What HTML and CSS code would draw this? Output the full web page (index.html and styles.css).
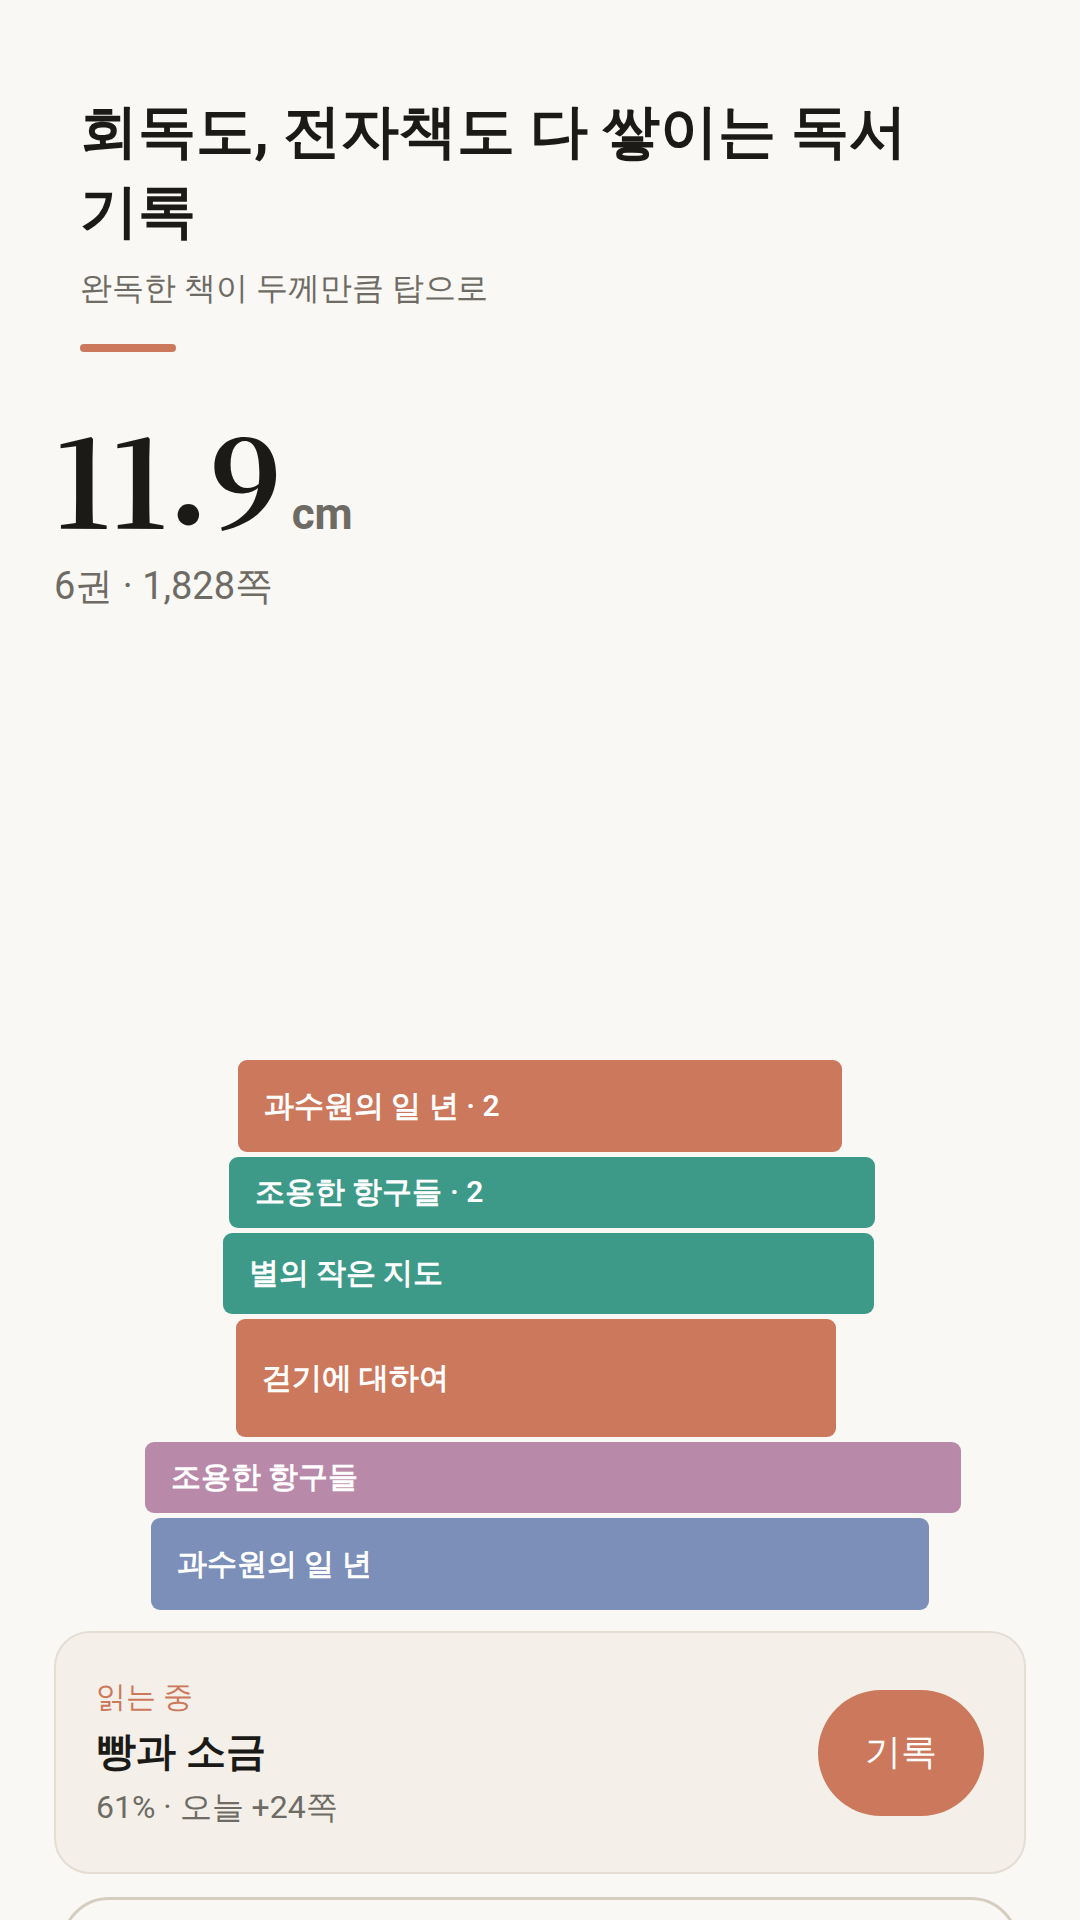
FILE: index.html
```html
<!DOCTYPE html>
<html lang="ko">
<head>
<meta charset="utf-8">
<title>독서 기록</title>
<link rel="stylesheet" href="styles.css">
</head>
<body>
<div class="page">
  <header class="header">
    <h1 class="title">회독도, 전자책도 다 쌓이는 독서 기록</h1>
    <p class="subtitle">완독한 책이 두께만큼 탑으로</p>
    <div class="accent"></div>
  </header>

  <section class="stats">
    <div class="height-row">
      <span class="height-value">11.9</span>
      <span class="height-unit">cm</span>
    </div>
    <div class="height-meta">6권 · 1,828쪽</div>
  </section>

  <section class="stack">
    <div class="book book-orange" style="width:604px;height:92px;transform:translateX(0px)">과수원의 일 년 · 2</div>
    <div class="book book-teal" style="width:646px;height:71px;transform:translateX(12px)">조용한 항구들 · 2</div>
    <div class="book book-teal" style="width:651px;height:81px;transform:translateX(8px)">별의 작은 지도</div>
    <div class="book book-orange" style="width:600px;height:118px;transform:translateX(-4px)">걷기에 대하여</div>
    <div class="book book-mauve" style="width:816px;height:71px;transform:translateX(13px)">조용한 항구들</div>
    <div class="book book-blue" style="width:778px;height:92px;transform:translateX(0px)">과수원의 일 년</div>
  </section>

  <section class="reading-card">
    <div class="reading-info">
      <div class="reading-label">읽는 중</div>
      <div class="reading-title">빵과 소금</div>
      <div class="reading-meta">61% · 오늘 +24쪽</div>
    </div>
    <button class="record-btn" type="button">기록</button>
  </section>

  <section class="next-card"></section>
</div>
</body>
</html>
```

FILE: styles.css
```css
* {
  box-sizing: border-box;
}

html, body {
  margin: 0;
  padding: 0;
}

body {
  width: 1080px;
  height: 1920px;
  overflow: hidden;
  background: #f9f8f4;
  font-family: Roboto, sans-serif;
  color: #1b1a17;
  word-break: keep-all;
}

.page {
  display: flex;
  flex-direction: column;
  height: 1920px;
  overflow: hidden;
}

.header {
  padding: 91px 80px 0 80px;
}

.title {
  margin: 0;
  font-size: 58px;
  line-height: 80px;
  font-weight: 800;
  color: #1b1a17;
  word-break: keep-all;
}

.subtitle {
  margin: 15px 0 0 0;
  font-size: 32px;
  line-height: 45px;
  font-weight: 400;
  color: #6e6b65;
}

.accent {
  width: 96px;
  height: 8px;
  margin-top: 33px;
  border-radius: 4px;
  background: #cc785c;
}

.stats {
  padding: 0 54px;
  margin-top: 63px;
}

.height-row {
  display: flex;
  align-items: baseline;
}

.height-value {
  font-family: "Noto Serif CJK JP", "Liberation Serif", serif;
  font-weight: 700;
  font-size: 122px;
  line-height: 124px;
  color: #1b1a17;
}

.height-unit {
  margin-left: 10px;
  font-size: 44px;
  font-weight: 700;
  color: #6e6b65;
}

.height-meta {
  margin-top: 22px;
  font-size: 38px;
  line-height: 49px;
  color: #6e6b65;
}

.stack {
  margin-top: 449px;
  display: flex;
  flex-direction: column;
  align-items: center;
  gap: 5px;
}

.book {
  display: flex;
  align-items: center;
  flex-shrink: 0;
  padding-left: 26px;
  border-radius: 9px;
  color: #ffffff;
  font-size: 30px;
  font-weight: 600;
  white-space: nowrap;
}

.book-orange { background: #cc785c; }
.book-teal { background: #3e9a88; }
.book-mauve { background: #b989a9; }
.book-blue { background: #7b8fb8; }

.reading-card {
  margin: 21px 54px 0 54px;
  padding: 44px 40px;
  display: flex;
  align-items: center;
  justify-content: space-between;
  background: #f4f0e9;
  border: 2px solid #e4ddd3;
  border-radius: 36px;
  flex-shrink: 0;
}

.reading-label {
  font-size: 30px;
  line-height: 39px;
  font-weight: 500;
  color: #cc785c;
}

.reading-title {
  margin-top: 10px;
  font-size: 40px;
  line-height: 52px;
  font-weight: 800;
  color: #1b1a17;
}

.reading-meta {
  margin-top: 8px;
  font-size: 32px;
  line-height: 42px;
  color: #6e6b65;
}

.record-btn {
  width: 166px;
  height: 126px;
  border: none;
  border-radius: 63px;
  background: #cc785c;
  color: #ffffff;
  font-family: Roboto, sans-serif;
  font-size: 36px;
  font-weight: 400;
  padding: 0;
}

.next-card {
  flex-shrink: 0;
  height: 140px;
  margin: 23px 61px 0 61px;
  border: 3px solid #d6cdc1;
  border-radius: 48px;
  background: #f9f8f4;
}
```
